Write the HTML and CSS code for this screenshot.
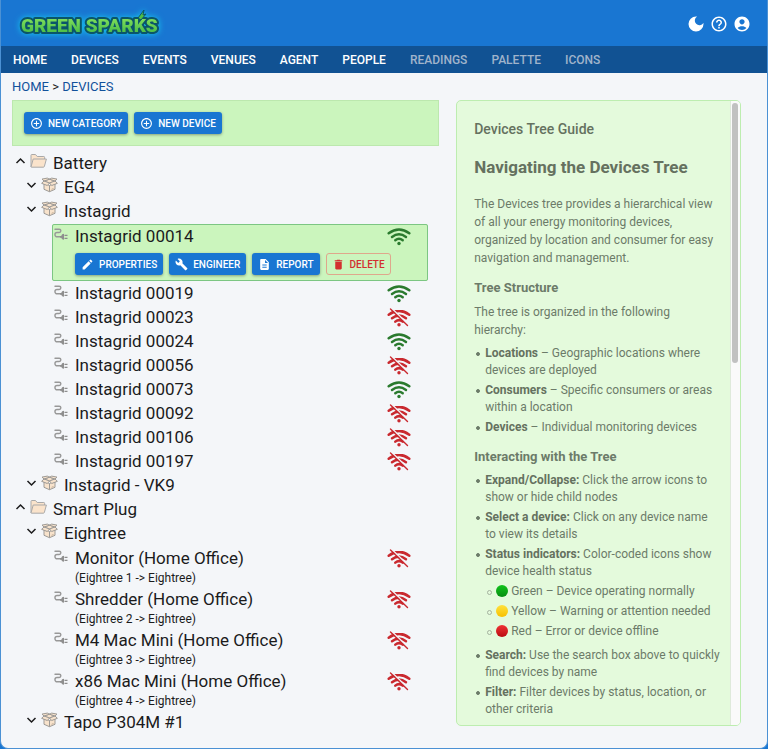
FILE: index.html
```html
<!DOCTYPE html>
<html lang="en">
<head>
<meta charset="utf-8">
<meta name="viewport" content="width=device-width, initial-scale=1">
<title>Green Sparks – Devices</title>
<link rel="stylesheet" href="styles.css">
</head>
<body>
<svg class="sprite" aria-hidden="true">
  <defs>
    <symbol id="up" viewBox="0 0 11 11"><path d="M1.500 7.500l4-4 4 4" fill="none" stroke="currentColor" stroke-width="1.500"/></symbol>
    <symbol id="down" viewBox="0 0 11 11"><path d="M1.500 3.500l4 4 4-4" fill="none" stroke="currentColor" stroke-width="1.500"/></symbol>
    <symbol id="folder" viewBox="0 0 17 15"><g fill="#fae3cb" stroke="#a9a9a9" stroke-linejoin="round"><path d="M1 13.500V1.800q0-.8.8-.8h3.700l1.700 2h6.600q.8 0 .8.800v2"/><path d="M1 13.500L3.200 5.500H16.400L14.400 12.800q-.2.900-1 .9H1.500z"/></g></symbol>
    <symbol id="box" viewBox="0 0 17 15"><g fill="#f8e3cc" stroke="#9d9a96" stroke-linejoin="round"><path d="M3 6v5.800l5.500 2.400 5.500-2.400V6L8.500 8z"/><path d="M8.500 8v6.200"/><path d="M3 3.500L8.500 5.500 14 3.500 8.500 1.700z"/><path d="M3 3.500L.6 5.800l5.700 2.200L8.500 5.500zM14 3.500l2.400 2.300-5.700 2.200L8.500 5.500zM3 3.500L1 1.600 6.300.6l2.200 1.100zM14 3.500l2-1.900L10.700.6 8.500 1.700z"/></g><path d="M10.500 11.800l2-.8" stroke="#b7a28c" stroke-width=".8"/></symbol>
    <symbol id="plug" viewBox="0 0 14 13"><path d="M1 1.700h4.200a1.600 1.600 0 0 1 0 3.300H3.100a2 2 0 0 0 0 4.300H6" fill="none" stroke="#989898" stroke-width="1.400" stroke-linecap="round"/><path d="M6 8.500h1.200Q7.700 6.300 10 6.300v6Q7.700 12.300 7.200 10.200H6zM10.500 7.200H13.500v1.200h-3zM10.500 10.200H13.500v1.200h-3z" fill="#8e8e8e"/></symbol>
    <symbol id="wifi" viewBox="0 0 24 18"><g fill="none" stroke="currentColor" stroke-width="2.500" stroke-linecap="round"><path d="M1.700 5.800Q12-1.800 22.300 5.800"/><path d="M5 9.400Q12 4 19 9.400"/><path d="M8.300 12.700Q12 9.700 15.700 12.700"/></g><circle cx="12" cy="16" r="1.700" fill="currentColor"/></symbol>
    <symbol id="nowifi" viewBox="0 0 24 18"><mask id="cut"><path d="M0 0h24v18H0z" fill="#fff"/><path d="M4.900 0L22.500 17" stroke="#000" stroke-width="1.400"/></mask><g mask="url(#cut)"><g fill="none" stroke="currentColor" stroke-width="2.500" stroke-linecap="round"><path d="M1.700 6.200Q12-1.400 22.300 6.200"/><path d="M5 9.800Q12 4.400 19 9.800"/><path d="M8.300 13.100Q12 10.100 15.700 13.100"/></g></g><circle cx="12" cy="16.200" r="1.700" fill="currentColor"/><path d="M3.500.5L20.500 17" stroke="currentColor" stroke-width="1.400" stroke-linecap="round"/></symbol>
    <symbol id="plus" viewBox="0 0 24 24"><path fill="currentColor" d="M13 7h-2v4H7v2h4v4h2v-4h4v-2h-4V7zm-1-5C6.480 2 2 6.480 2 12s4.480 10 10 10 10-4.480 10-10S17.520 2 12 2zm0 18c-4.410 0-8-3.590-8-8s3.590-8 8-8 8 3.590 8 8-3.590 8-8 8z"/></symbol>
    <symbol id="edit" viewBox="0 0 24 24"><path fill="currentColor" d="M3 17.250V21h3.750L17.810 9.940l-3.750-3.750L3 17.250zM20.710 7.040c.39-.39.39-1.020 0-1.410l-2.340-2.340a.996.996 0 0 0-1.410 0l-1.830 1.830 3.750 3.750 1.830-1.830z"/></symbol>
    <symbol id="wrench" viewBox="0 0 24 24"><path fill="currentColor" d="M22.700 19l-9.100-9.100c.9-2.300.4-5-1.500-6.900-2-2-5-2.400-7.400-1.300L9 6 6 9 1.600 4.700C.4 7.100.9 10.100 2.900 12.100c1.900 1.900 4.600 2.400 6.900 1.500l9.100 9.100c.4.4 1 .4 1.400 0l2.300-2.300c.5-.4.5-1.100.1-1.400z"/></symbol>
    <symbol id="doc" viewBox="0 0 24 24"><path fill="currentColor" d="M14 2H6c-1.100 0-2 .9-2 2v16c0 1.100.9 2 2 2h12c1.100 0 2-.9 2-2V8l-6-6zm2 16H8v-2h8v2zm0-4H8v-2h8v2zm-3-5V3.500L18.500 9H13z"/></symbol>
    <symbol id="trash" viewBox="0 0 24 24"><path fill="currentColor" d="M6 19c0 1.100.9 2 2 2h8c1.100 0 2-.9 2-2V7H6v12zM19 4h-3.500l-1-1h-5l-1 1H5v2h14V4z"/></symbol>
    <symbol id="moon" viewBox="0 0 24 24"><path fill="currentColor" d="M12 2a10 10 0 1 0 10 10c0-.5 0-.9-.1-1.400A6.200 6.200 0 1 1 13.400 2.100 10 10 0 0 0 12 2z"/></symbol>
    <symbol id="help" viewBox="0 0 24 24"><path fill="currentColor" d="M11 18h2v-2h-2v2zm1-16C6.480 2 2 6.480 2 12s4.480 10 10 10 10-4.480 10-10S17.520 2 12 2zm0 18c-4.410 0-8-3.590-8-8s3.590-8 8-8 8 3.590 8 8-3.590 8-8 8zm0-14c-2.210 0-4 1.790-4 4h2c0-1.100.9-2 2-2s2 .9 2 2c0 2-3 1.750-3 5h2c0-2.250 3-2.500 3-5 0-2.210-1.790-4-4-4z"/></symbol>
    <symbol id="user" viewBox="0 0 24 24"><path fill="currentColor" d="M12 2C6.480 2 2 6.480 2 12s4.480 10 10 10 10-4.480 10-10S17.520 2 12 2zm0 3.500c1.930 0 3.500 1.570 3.500 3.500s-1.570 3.500-3.500 3.500S8.500 10.930 8.500 9s1.570-3.500 3.500-3.500zM12 20c-2.300 0-4.400-1-5.900-2.600 1.500-1.500 3.600-2.400 5.900-2.400s4.400.9 5.900 2.400C16.400 19 14.300 20 12 20z"/></symbol>
  </defs>
</svg>
<div class="app">
  <header class="topbar">
    <a class="logo" href="#" aria-label="Green Sparks">
      <svg viewBox="0 0 152 38">
        <defs><linearGradient id="leaf" x1="0" y1="0" x2="0" y2="1"><stop offset="0" stop-color="#8fe860"/><stop offset="1" stop-color="#3bb443"/></linearGradient></defs>
        <text class="wordmark" x="8" y="27">GREEN SPARKS</text>
        <path d="M125 13l6-8-1 5 3-1-5 6z" fill="#4fbf45" stroke="#0b5569"/>
      </svg>
    </a>
    <div class="actions">
      <button type="button" aria-label="Dark mode"><svg><use href="#moon"/></svg></button>
      <button type="button" aria-label="Help"><svg><use href="#help"/></svg></button>
      <button type="button" aria-label="Account"><svg><use href="#user"/></svg></button>
    </div>
  </header>
  <nav class="menu">
    <a href="#">HOME</a><a href="#">DEVICES</a><a href="#">EVENTS</a><a href="#">VENUES</a><a href="#">AGENT</a><a href="#">PEOPLE</a><a class="muted" href="#">READINGS</a><a class="muted" href="#">PALETTE</a><a class="muted" href="#">ICONS</a>
  </nav>
  <div class="crumbs"><a href="#">HOME</a> &gt; <a href="#">DEVICES</a></div>
  <main class="columns">
    <section class="devices">
      <div class="toolbar">
        <button class="btn" type="button"><svg><use href="#plus"/></svg>NEW CATEGORY</button>
        <button class="btn" type="button"><svg><use href="#plus"/></svg>NEW DEVICE</button>
      </div>
      <ul class="tree">
        <li><div class="row"><svg class="arrow"><use href="#up"/></svg><svg class="kind"><use href="#folder"/></svg><span>Battery</span></div>
          <ul class="groups">
            <li><div class="row"><svg class="arrow"><use href="#down"/></svg><svg class="kind"><use href="#box"/></svg><span>EG4</span></div></li>
            <li><div class="row"><svg class="arrow"><use href="#down"/></svg><svg class="kind"><use href="#box"/></svg><span>Instagrid</span></div>
              <ul class="leaves">
                <li class="selected"><div class="row"><svg class="plug"><use href="#plug"/></svg><span>Instagrid 00014</span><svg class="signal on"><use href="#wifi"/></svg></div>
                  <div class="buttons">
                    <button class="btn" type="button"><svg><use href="#edit"/></svg>PROPERTIES</button>
                    <button class="btn" type="button"><svg><use href="#wrench"/></svg>ENGINEER</button>
                    <button class="btn" type="button"><svg><use href="#doc"/></svg>REPORT</button>
                    <button class="btn danger" type="button"><svg><use href="#trash"/></svg>DELETE</button>
                  </div></li>
                <li><div class="row"><svg class="plug"><use href="#plug"/></svg><span>Instagrid 00019</span><svg class="signal on"><use href="#wifi"/></svg></div></li>
                <li><div class="row"><svg class="plug"><use href="#plug"/></svg><span>Instagrid 00023</span><svg class="signal"><use href="#nowifi"/></svg></div></li>
                <li><div class="row"><svg class="plug"><use href="#plug"/></svg><span>Instagrid 00024</span><svg class="signal on"><use href="#wifi"/></svg></div></li>
                <li><div class="row"><svg class="plug"><use href="#plug"/></svg><span>Instagrid 00056</span><svg class="signal"><use href="#nowifi"/></svg></div></li>
                <li><div class="row"><svg class="plug"><use href="#plug"/></svg><span>Instagrid 00073</span><svg class="signal on"><use href="#wifi"/></svg></div></li>
                <li><div class="row"><svg class="plug"><use href="#plug"/></svg><span>Instagrid 00092</span><svg class="signal"><use href="#nowifi"/></svg></div></li>
                <li><div class="row"><svg class="plug"><use href="#plug"/></svg><span>Instagrid 00106</span><svg class="signal"><use href="#nowifi"/></svg></div></li>
                <li><div class="row"><svg class="plug"><use href="#plug"/></svg><span>Instagrid 00197</span><svg class="signal"><use href="#nowifi"/></svg></div></li>
              </ul></li>
            <li><div class="row"><svg class="arrow"><use href="#down"/></svg><svg class="kind"><use href="#box"/></svg><span>Instagrid - VK9</span></div></li>
          </ul></li>
        <li><div class="row"><svg class="arrow"><use href="#up"/></svg><svg class="kind"><use href="#folder"/></svg><span>Smart Plug</span></div>
          <ul class="groups">
            <li><div class="row"><svg class="arrow"><use href="#down"/></svg><svg class="kind"><use href="#box"/></svg><span>Eightree</span></div>
              <ul class="leaves">
                <li><div class="row"><svg class="plug"><use href="#plug"/></svg><span>Monitor (Home Office)</span><svg class="signal"><use href="#nowifi"/></svg></div><div class="note">(Eightree 1 -&gt; Eightree)</div></li>
                <li><div class="row"><svg class="plug"><use href="#plug"/></svg><span>Shredder (Home Office)</span><svg class="signal"><use href="#nowifi"/></svg></div><div class="note">(Eightree 2 -&gt; Eightree)</div></li>
                <li><div class="row"><svg class="plug"><use href="#plug"/></svg><span>M4 Mac Mini (Home Office)</span><svg class="signal"><use href="#nowifi"/></svg></div><div class="note">(Eightree 3 -&gt; Eightree)</div></li>
                <li><div class="row"><svg class="plug"><use href="#plug"/></svg><span>x86 Mac Mini (Home Office)</span><svg class="signal"><use href="#nowifi"/></svg></div><div class="note">(Eightree 4 -&gt; Eightree)</div></li>
              </ul></li>
            <li><div class="row"><svg class="arrow"><use href="#down"/></svg><svg class="kind"><use href="#box"/></svg><span>Tapo P304M #1</span></div></li>
          </ul></li>
      </ul>
    </section>
    <aside class="guide">
      <div class="guide-body">
        <div class="guide-label">Devices Tree Guide</div>
        <h2>Navigating the Devices Tree</h2>
        <p>The Devices tree provides a hierarchical view of all your energy monitoring devices, organized by location and consumer for easy navigation and management.</p>
        <h3>Tree Structure</h3>
        <p>The tree is organized in the following hierarchy:</p>
        <ul>
          <li><b>Locations</b> – Geographic locations where devices are deployed</li>
          <li><b>Consumers</b> – Specific consumers or areas within a location</li>
          <li><b>Devices</b> – Individual monitoring devices</li>
        </ul>
        <h3>Interacting with the Tree</h3>
        <ul>
          <li><b>Expand/Collapse:</b> Click the arrow icons to show or hide child nodes</li>
          <li><b>Select a device:</b> Click on any device name to&nbsp;view its details</li>
          <li><b>Status indicators:</b> Color-coded icons show device health status
            <ul class="statuses">
              <li><i class="dot green"></i>Green – Device operating normally</li>
              <li><i class="dot yellow"></i>Yellow – Warning or attention needed</li>
              <li><i class="dot red"></i>Red – Error or device offline</li>
            </ul></li>
          <li><b>Search:</b> Use the search box above to quickly find devices by name</li>
          <li><b>Filter:</b> Filter devices by status, location, or other criteria</li>
        </ul>
      </div>
      <div class="track"><div class="thumb"></div></div>
    </aside>
  </main>
</div>
</body>
</html>
```
FILE: styles.css
```css
*, *::before { box-sizing: border-box; }
body { margin: 0; background: #1976d2; font-family: Roboto, "Liberation Sans", sans-serif; color: #1b1b1c; }
ul { list-style: none; margin: 0; padding: 0; }
a { color: inherit; text-decoration: none; }
button { font: inherit; cursor: pointer; }
svg { display: block; flex: none; }
.sprite { position: absolute; width: 0; height: 0; }

.app { min-height: 100vh; display: flex; flex-direction: column; background: #f4f6f9; border: 1px solid #4b91d4; border-top: 0; border-radius: 0 0 8px 8px; overflow: hidden; }
.topbar { height: 46px; display: flex; align-items: center; justify-content: space-between; background: #1976d2; padding: 2px 16px 0 12px; }
.logo svg { width: 152px; height: 38px; filter: drop-shadow(0 0 3px #16c7ef); }
.wordmark { font: 900 19px Roboto, sans-serif; fill: url(#leaf); stroke: #0b5569; stroke-width: 4px; stroke-linejoin: round; paint-order: stroke; }
.actions { display: flex; gap: 5px; color: #fff; }
.actions button { border: 0; padding: 0; background: none; color: inherit; }
.actions svg { width: 18px; height: 18px; }
.menu { height: 27px; display: flex; align-items: center; gap: 24px; padding: 0 12px; background: #115293; color: #fff; font-size: 12px; font-weight: 500; }
.menu .muted { color: #a0b4cb; }
.crumbs { padding: 5px 11px 4px; font-size: 13px; line-height: 18px; }
.crumbs a { color: #11519b; }

.columns { flex: 1; display: grid; grid-template-columns: 3fr 2fr; gap: 17px; padding: 0 26px 0 11px; margin-bottom: 13px; }
.toolbar { display: flex; gap: 6px; padding: 11px; margin-bottom: 5px; background: #cbf5bd; border: 1px solid #bce8ae; }
.btn { display: flex; align-items: center; gap: 5px; height: 22px; padding: 0 6px; border: 0; border-radius: 3px; background: #1976d2; color: #fff; font-size: 10px; font-weight: 500; white-space: nowrap; box-shadow: 0 1px 3px rgba(0, 0, 0, .35); }
.btn svg { width: 13px; height: 13px; }
.danger { padding: 0 5px; background: none; border: 1px solid #dfa78c; color: #d32f2f; box-shadow: none; }

.tree { font-size: 17px; line-height: 24px; padding-left: 3px; }
.row { display: flex; height: 24px; align-items: flex-start; white-space: nowrap; }
.arrow { width: 11px; height: 20px; margin-right: 4px; }
.kind { width: 17px; height: 20px; margin-right: 6px; }
.groups { padding-left: 11px; }
.leaves { margin-top: 1px; padding: 0 11px 0 26px; }
.leaves li { padding: 0 17px 0 2px; }
.plug { width: 14px; height: 20px; margin-right: 7px; }
.signal { width: 24px; height: 25px; margin-left: auto; color: #c9292f; }
.signal.on { color: #2a7a2e; }
.leaves .selected { padding-bottom: 6px; background: #cbf5bd; outline: 1px solid #7cc683; outline-offset: -1px; border-radius: 2px; }
.buttons { display: flex; gap: 6px; padding: 5px 0 0 21px; line-height: normal; }
.note { padding-left: 21px; font-size: 12px; line-height: 17px; }

.guide { display: flex; margin-bottom: 9px; border: 1px solid #bdedb0; border-radius: 5px; overflow: hidden; background: #e4fadc; color: #6c7b69; }
.guide-body { flex: 1; padding: 15px 8px 0 17px; font-size: 12px; }
.guide-label { font-size: 14px; font-weight: 500; line-height: 26px; color: #65715f; }
.guide h2 { margin: 12px 0 15px; font-size: 17px; line-height: 26px; color: #65715f; }
.guide h3 { margin: 12px 0 6px; font-size: 13px; line-height: 18px; }
.guide p { margin: 0 0 6px; line-height: 18px; }
.guide b { color: #65715f; }
.guide-body li { position: relative; line-height: 17px; margin-bottom: 3px; }
.guide-body ul { padding-left: 11px; }
.guide-body li::before { content: ""; position: absolute; left: -9px; top: 7px; width: 4px; height: 4px; border: 1px solid #6c7b69; border-radius: 50%; background: #6c7b69; }
.guide-body .statuses { padding: 3px 0 1px 11px; }
.guide-body .statuses li::before { width: 5px; height: 5px; border-color: #a5b39f; background: none; }
.dot { display: inline-block; width: 12px; height: 12px; margin-right: 3px; border-radius: 50%; vertical-align: -2px; }
.green { background: linear-gradient(#12c41c, #078d12); }
.yellow { background: linear-gradient(#ffe13d, #f7c000); }
.red { background: linear-gradient(#f03434, #b90b12); }
.track { width: 10px; padding: 2px 2px 2px 1px; background: #fafafa; border-left: 1px solid #dfeadb; }
.thumb { width: 6px; height: 42%; border-radius: 3px; background: #c1c1c1; }
```
